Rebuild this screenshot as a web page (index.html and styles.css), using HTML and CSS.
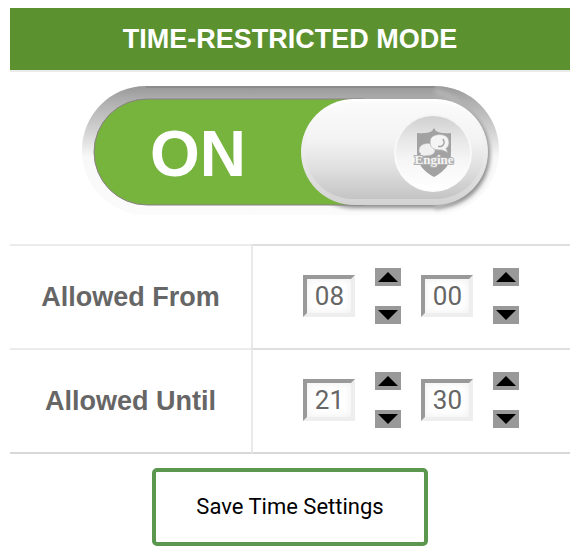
FILE: index.html
```
<!DOCTYPE html>
<html lang="en">
<head>
    <meta charset="UTF-8">
    <meta name="viewport" content="width=device-width, initial-scale=1.0">
    <title>Time-Restricted Mode</title>
    <link rel="stylesheet" href="styles.css">
</head>
<body>

    <form id="timeForm">
        <table class="settings">
            <colgroup>
                <col class="name-col">
                <col>
            </colgroup>
            <thead>
                <tr>
                    <th colspan="2" class="title">TIME-RESTRICTED MODE</th>
                </tr>
            </thead>
            <tbody>
                <tr>
                    <td colspan="2" class="mode">
                        <label class="switch">
                            <input type="checkbox" id="restricted" aria-label="Time-restricted mode" checked>
                            <svg viewBox="0 0 440 136" width="440" height="136">
                                <defs>
                                    <linearGradient id="track" x1="0" y1="0" x2="0" y2="1">
                                        <stop offset="0" stop-color="#989898"/>
                                        <stop offset="0.1" stop-color="#acacac"/>
                                        <stop offset="0.35" stop-color="#d2d2d2"/>
                                        <stop offset="0.55" stop-color="#f8f8f8"/>
                                        <stop offset="1" stop-color="#fbfbfb"/>
                                    </linearGradient>
                                    <linearGradient id="knob" x1="0" y1="0" x2="0" y2="1">
                                        <stop offset="0" stop-color="#fbfbfb"/>
                                        <stop offset="0.4" stop-color="#f3f3f3"/>
                                        <stop offset="0.7" stop-color="#dedede"/>
                                        <stop offset="1" stop-color="#c4c4c4"/>
                                    </linearGradient>
                                    <linearGradient id="rim" x1="0" y1="0" x2="0" y2="1">
                                        <stop offset="0" stop-color="#ffffff"/>
                                        <stop offset="0.5" stop-color="#ececec"/>
                                        <stop offset="1" stop-color="#d2d2d2"/>
                                    </linearGradient>
                                    <linearGradient id="disc" x1="0" y1="0" x2="0" y2="1">
                                        <stop offset="0" stop-color="#d0d0d0"/>
                                        <stop offset="0.3" stop-color="#e6e6e6"/>
                                        <stop offset="0.6" stop-color="#f6f6f6"/>
                                        <stop offset="1" stop-color="#ffffff"/>
                                    </linearGradient>
                                    <linearGradient id="discRim" x1="0" y1="0" x2="0" y2="1">
                                        <stop offset="0" stop-color="#f4f4f4"/>
                                        <stop offset="1" stop-color="#fdfdfd"/>
                                    </linearGradient>
                                    <filter id="soft" x="-10%" y="-10%" width="120%" height="120%">
                                        <feGaussianBlur stdDeviation="2"/>
                                    </filter>
                                    <clipPath id="trackClip">
                                        <rect x="12" y="4" width="418" height="128" rx="63"/>
                                    </clipPath>
                                </defs>
                                <!-- track -->
                                <rect x="12" y="4" width="417" height="129" rx="64" fill="url(#track)"/>
                                <path d="M76 5H365" stroke="#8c8c8c" stroke-width="2"/>
                                <g clip-path="url(#trackClip)">
                                    <rect x="231" y="19" width="189" height="107" rx="53" fill="#8c8c8c" filter="url(#soft)"/>
                                    <path d="M365 9a60 60 0 0 1 0 116" fill="none" stroke="#b4b4b4" stroke-width="6" filter="url(#soft)"/>
                                </g>
                                <rect x="24" y="17" width="320" height="106" rx="53" fill="#76b43e" stroke="#8b7f86" stroke-width="1"/>
                                <text x="80" y="94" class="state">ON</text>
                                <!-- knob -->
                                <rect x="231" y="17" width="187" height="106" rx="53" fill="url(#rim)"/>
                                <rect x="235" y="20" width="179" height="97" rx="48" fill="url(#knob)"/>
                                <circle cx="363" cy="71" r="39" fill="url(#discRim)"/>
                                <circle cx="363" cy="71" r="37" fill="url(#disc)"/>
                                <!-- shield -->
                                <path d="M347 51q10 1 15-2l2-3 2 3q5 3 15 2v20q0 15-17 24q-17-9-17-24z" fill="#a2a2a2"/>
                                <path d="M349 69q0-7 8-7.500q8 0 8 6q0 6-8 6l-7 1 1-3q-2-1-2-2.500z" fill="#f0f0f0" stroke="#c4c4c4" stroke-width=".5"/>
                                <path d="M360 60q0-7 9-7.500q10 0 10 8q0 4-3 6l2 4-6-2.500q-12 1-12-8z" fill="#f4f4f4" stroke="#b4b4b4" stroke-width=".7"/>
                                <path d="M373 57q3 5-2 7.500h-3" fill="none" stroke="#a5a5a5" stroke-width="1.500"/>
                                <text x="364" y="82" class="brand">Engine</text>
                            </svg>
                        </label>
                    </td>
                </tr>
                <tr>
                    <th scope="row" class="name">Allowed From</th>
                    <td class="value">
                        <div class="time">
                            <input type="text" value="08" aria-label="Allowed from, hours">
                            <div class="spin">
                                <button type="button" aria-label="Hour up"><svg viewBox="0 0 26 18"><path d="M13 4l10 10H3z"/></svg></button>
                                <button type="button" aria-label="Hour down"><svg viewBox="0 0 26 18"><path d="M13 14l10-10H3z"/></svg></button>
                            </div>
                            <input type="text" value="00" aria-label="Allowed from, minutes">
                            <div class="spin">
                                <button type="button" aria-label="Minute up"><svg viewBox="0 0 26 18"><path d="M13 4l10 10H3z"/></svg></button>
                                <button type="button" aria-label="Minute down"><svg viewBox="0 0 26 18"><path d="M13 14l10-10H3z"/></svg></button>
                            </div>
                        </div>
                    </td>
                </tr>
                <tr>
                    <th scope="row" class="name">Allowed Until</th>
                    <td class="value">
                        <div class="time">
                            <input type="text" value="21" aria-label="Allowed until, hours">
                            <div class="spin">
                                <button type="button" aria-label="Hour up"><svg viewBox="0 0 26 18"><path d="M13 4l10 10H3z"/></svg></button>
                                <button type="button" aria-label="Hour down"><svg viewBox="0 0 26 18"><path d="M13 14l10-10H3z"/></svg></button>
                            </div>
                            <input type="text" value="30" aria-label="Allowed until, minutes">
                            <div class="spin">
                                <button type="button" aria-label="Minute up"><svg viewBox="0 0 26 18"><path d="M13 4l10 10H3z"/></svg></button>
                                <button type="button" aria-label="Minute down"><svg viewBox="0 0 26 18"><path d="M13 14l10-10H3z"/></svg></button>
                            </div>
                        </div>
                    </td>
                </tr>
            </tbody>
        </table>
        <button type="submit" class="save">Save Time Settings</button>
    </form>

</body>
</html>
```
FILE: styles.css
```
body {
    margin: 8px 10px;
    background-color: #fff;
    font-family: "Liberation Sans", Arial, sans-serif;
    color: #666;
}

.settings {
    width: 100%;
    table-layout: fixed;
    border-collapse: separate;
    border-spacing: 0;
    font-size: 27px;
    line-height: 30px;
}

.name-col {
    width: 43%;
}

.settings th,
.settings td {
    padding: 0;
    text-align: center;
    vertical-align: middle;
}

.settings .title {
    padding: 16px 0;
    background-color: #5b912e;
    color: #fff;
}

.settings .mode {
    padding: 10px 0 26px;
    border-top: 2px solid #ebebeb;
}

.settings .name {
    height: 102px;
    border-top: 2px solid #ebebeb;
}

.settings .value {
    padding-bottom: 2px;
    border-top: 2px solid #dfdfdf;
    border-left: 2px solid #e9e9e9;
}

.settings tr:last-child > .name,
.settings tr:last-child > .value {
    border-bottom: 2px solid #d8d8d8;
}

/* on/off switch */
.switch {
    display: block;
    position: relative;
    cursor: pointer;
}

.switch input {
    position: absolute;
    opacity: 0;
}

.switch svg {
    display: block;
    max-width: 100%;
    margin: 0 auto;
}

.state {
    font-size: 64px;
    font-weight: bold;
    fill: #fff;
}

.brand {
    font-family: "Liberation Serif", serif;
    font-size: 13px;
    font-weight: bold;
    text-anchor: middle;
    fill: #f5f5f5;
    stroke: #b0b0b0;
    stroke-width: 2px;
    paint-order: stroke;
}

/* hours and minutes */
.time {
    display: flex;
    justify-content: center;
    align-items: center;
    gap: 20px;
}

.time input {
    box-sizing: border-box;
    width: 52px;
    height: 42px;
    padding: 0;
    border: 4px solid;
    border-color: #999 #eee #eee #999;
    box-shadow: inset 0 0 8px #eee;
    font-family: Roboto, sans-serif;
    font-size: 26px;
    color: #666;
    text-align: center;
}

.spin {
    display: flex;
    flex-direction: column;
    gap: 20px;
}

.spin button {
    width: 26px;
    height: 18px;
    padding: 0;
    border: none;
    background-color: #999;
    cursor: pointer;
}

.spin svg {
    display: block;
}

.save {
    display: block;
    margin: 14px auto 0;
    padding: 22px 40px;
    border: 4px solid #5b974f;
    border-radius: 5px;
    background-color: #fff;
    color: #000;
    font-family: Roboto, sans-serif;
    font-size: 22px;
    line-height: 26px;
    cursor: pointer;
}
```
